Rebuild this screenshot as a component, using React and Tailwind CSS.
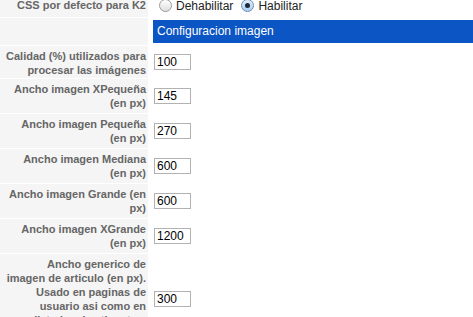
import React from "react";

const rows = [
  { label: ["Calidad (%) utilizados para", "procesar las imágenes"], value: "100", pad: "pt-[3px] pb-[1px]" },
  { label: ["Ancho imagen XPequeña", "(en px)"], value: "145" },
  { label: ["Ancho imagen Pequeña", "(en px)"], value: "270" },
  { label: ["Ancho imagen Mediana", "(en px)"], value: "600" },
  { label: ["Ancho imagen Grande (en", "px)"], value: "600" },
  { label: ["Ancho imagen XGrande", "(en px)"], value: "1200" },
  {
    label: [
      "Ancho generico de",
      "imagen de articulo (en px).",
      "Usado en paginas de",
      "usuario asi como en",
      "listados de etiquetas.",
      "",
    ],
    value: "300",
  },
];

function Radio({ checked, label }) {
  return (
    <label className="flex items-center gap-[4px]">
      {checked ? (
        <span className="flex h-[13px] w-[13px] items-center justify-center rounded-full border border-[#6f8fb8] bg-gradient-to-b from-[#e4f0fb] to-[#a9cdef]">
          <span className="h-[5px] w-[5px] rounded-full bg-[#1c2a3c]" />
        </span>
      ) : (
        <span className="h-[13px] w-[13px] rounded-full border border-[#9a9a9a] bg-gradient-to-b from-white to-[#dedede]" />
      )}
      <span className="text-[12px] leading-[14px] text-[#222]">{label}</span>
    </label>
  );
}

function ParamRow({ label, value, pad }) {
  return (
    <div className="flex">
      <div
        className={
          "w-[148px] shrink-0 bg-[#f5f5f5] pr-[2px] text-right text-[11px] font-bold leading-[14px] text-[#666] " +
          (pad || "py-[3px]")
        }
      >
        {label.map((line, i) => (
          <div key={i} className="whitespace-nowrap">
            {line || "\u00a0"}
          </div>
        ))}
      </div>
      <div className="flex flex-1 items-center pl-[6px]">
        <input
          type="text"
          defaultValue={value}
          className="h-[16px] w-[37px] border border-[#b2b2b2] bg-white px-[2px] text-[12px] leading-[14px] text-black outline-none"
        />
      </div>
    </div>
  );
}

export default function App() {
  return (
    <div
      className="h-[317px] w-[473px] overflow-hidden bg-white"
      style={{ fontFamily: '"Liberation Sans", Arial, sans-serif' }}
    >
      <div className="mt-[-6px] flex flex-col gap-px">
        <div className="flex">
          <div className="flex h-[23px] w-[148px] shrink-0 items-center justify-end bg-[#f5f5f5] pr-[2px] text-[11px] font-bold text-[#666]">
            CSS por defecto para K2
          </div>
          <div className="flex flex-1 items-center gap-[8px] pl-[11px]">
            <Radio label="Dehabilitar" />
            <Radio checked label="Habilitar" />
          </div>
        </div>

        <div className="flex">
          <div className="w-[148px] shrink-0 bg-[#f5f5f5]" />
          <div className="flex-1 py-[2px] pl-[5px]">
            <div className="h-[23px] bg-[#0b55c4] pl-[4px] text-[12px] leading-[23px] text-white">
              Configuracion imagen
            </div>
          </div>
        </div>

        {rows.map((row, i) => (
          <ParamRow key={i} label={row.label} value={row.value} pad={row.pad} />
        ))}
      </div>
    </div>
  );
}
